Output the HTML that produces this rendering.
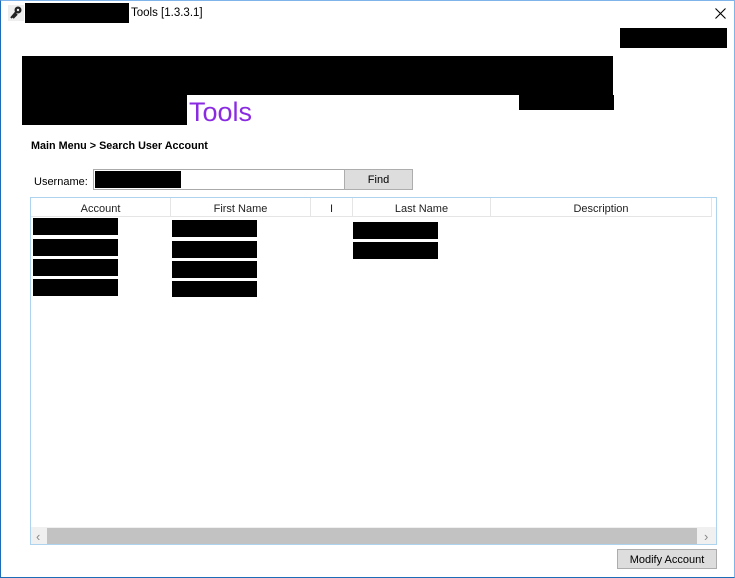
<!DOCTYPE html>
<html><head><style>
*{margin:0;padding:0;box-sizing:border-box}
body{width:735px;height:578px;position:relative;background:#fff;font-family:"Liberation Sans",sans-serif;font-size:12px;color:#000;overflow:hidden}
.a{position:absolute}
.k{position:absolute;background:#000}
.hd{position:absolute;top:0;height:18px;line-height:22px;text-align:center;border-right:1px solid #e5e5e5;font-size:11px;color:#222}
</style></head><body>
<div class="a" style="left:0;top:0;width:735px;height:578px;border:1px solid #7eb4ea;border-left-color:#1c6cb8;border-bottom-color:#1c6cb8"></div>
<svg class="a" style="left:8px;top:5px" width="16" height="16" viewBox="0 0 16 16"><rect width="16" height="16" fill="#eee"/><path d="M3 13 L8 7 M5 13 L9 9" stroke="#222" stroke-width="2"/><circle cx="10" cy="5" r="3.5" fill="#222"/><circle cx="10" cy="5" r="1.2" fill="#eee"/></svg>
<div class="k" style="left:25px;top:3px;width:104px;height:20px"></div>
<div class="a" style="left:131px;top:7px;font-size:11.5px">Tools [1.3.3.1]</div>
<svg class="a" style="left:715px;top:8px" width="11" height="11" viewBox="0 0 11 11"><path d="M0.5 0.5L10.5 10.5M10.5 0.5L0.5 10.5" stroke="#000" stroke-width="1.1"/></svg>
<div class="k" style="left:620px;top:28px;width:107px;height:20px"></div>
<div class="k" style="left:22px;top:56px;width:591px;height:39px"></div>
<div class="k" style="left:22px;top:95px;width:165px;height:30px"></div>
<div class="k" style="left:519px;top:95px;width:95px;height:15px"></div>
<div class="a" style="left:189px;top:94px;font-size:27px;color:#8a2be2;line-height:36px">Tools</div>
<div class="a" style="left:31px;top:140px;font-weight:bold;font-size:10.8px">Main Menu &gt; Search User Account</div>
<div class="a" style="left:34px;top:176px;font-size:11px">Username:</div>
<div class="a" style="left:93px;top:169px;width:252px;height:21px;border:1px solid #aaa"></div>
<div class="k" style="left:95px;top:171px;width:86px;height:17px"></div>
<div class="a" style="left:344px;top:169px;width:69px;height:21px;border:1px solid #adadad;background:#ddd;text-align:center;line-height:21px;font-size:11px">Find</div>
<div class="a" style="left:30px;top:197px;width:687px;height:348px;border:1px solid #aed3ef">
 <div class="hd" style="left:0;width:140px">Account</div>
 <div class="hd" style="left:140px;width:140px">First Name</div>
 <div class="hd" style="left:280px;width:42px">I</div>
 <div class="hd" style="left:322px;width:138px">Last Name</div>
 <div class="hd" style="left:460px;width:221px">Description</div>
 <div class="a" style="left:0;top:18px;width:681px;height:1px;background:#e5e5e5"></div>
 <div class="a" style="left:0;top:329px;width:685px;height:17px;background:#f0f0f0"></div>
 <div class="a" style="left:16px;top:330px;width:650px;height:16px;background:#c2c2c2"></div>
 <div class="a" style="left:5px;top:331px;color:#888;font-size:13px">‹</div>
 <div class="a" style="left:673px;top:331px;color:#888;font-size:13px">›</div>
</div>
<div class="k" style="left:33px;top:218px;width:85px;height:17px"></div>
<div class="k" style="left:33px;top:239px;width:85px;height:17px"></div>
<div class="k" style="left:33px;top:259px;width:85px;height:17px"></div>
<div class="k" style="left:33px;top:279px;width:85px;height:17px"></div>
<div class="k" style="left:172px;top:220px;width:85px;height:17px"></div>
<div class="k" style="left:172px;top:241px;width:85px;height:17px"></div>
<div class="k" style="left:172px;top:261px;width:85px;height:17px"></div>
<div class="k" style="left:172px;top:281px;width:85px;height:16px"></div>
<div class="k" style="left:353px;top:222px;width:85px;height:17px"></div>
<div class="k" style="left:353px;top:242px;width:85px;height:17px"></div>
<div class="a" style="left:617px;top:549px;width:100px;height:20px;border:1px solid #adadad;background:#ddd;text-align:center;line-height:20px;font-size:11px">Modify Account</div>
</body></html>
